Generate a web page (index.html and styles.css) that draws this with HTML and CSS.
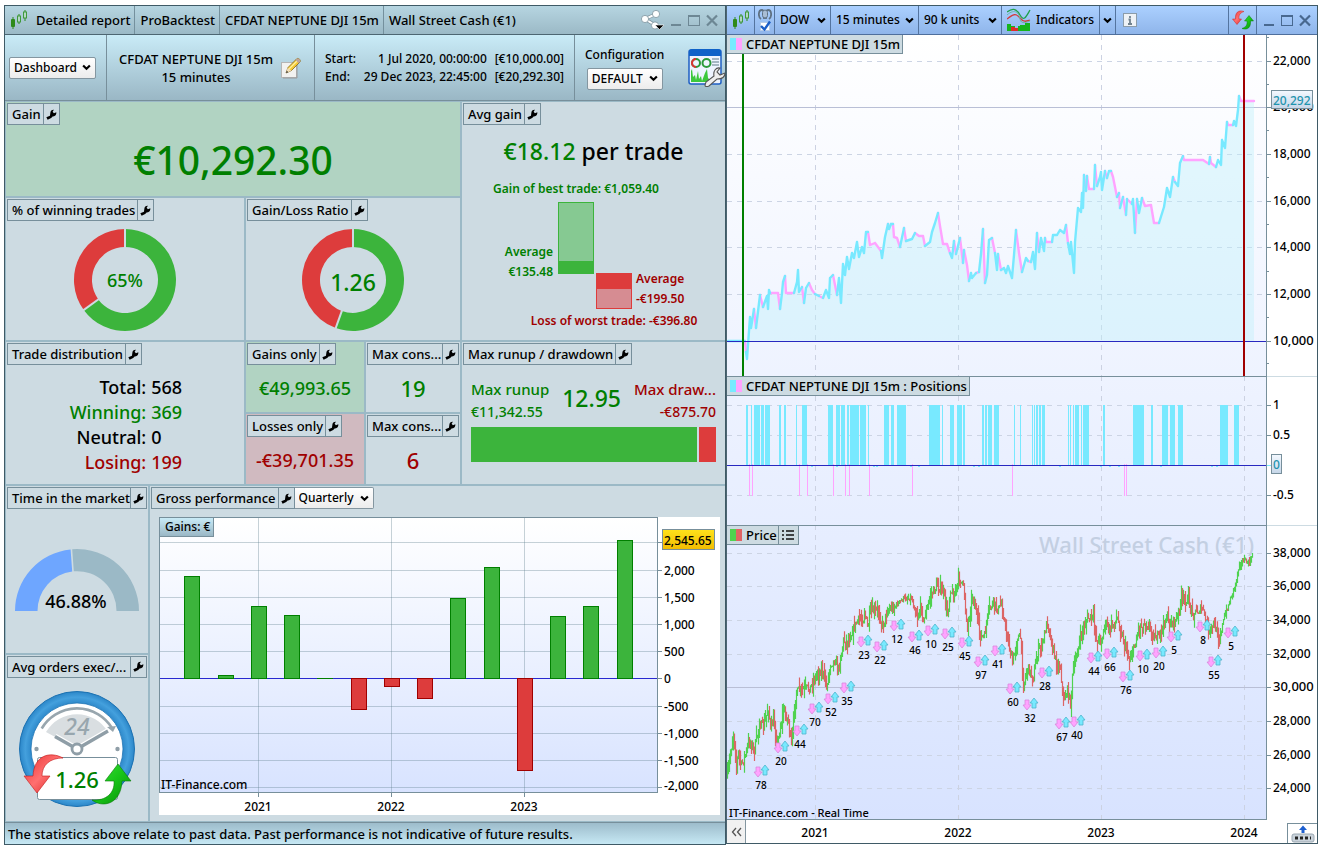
FILE: index.html
```html
<!DOCTYPE html>
<html lang="en">
<head>
<meta charset="utf-8">
<title>Detailed report - ProBacktest</title>
<link rel="stylesheet" href="styles.css">
</head>
<body>
<svg class="defs" aria-hidden="true">
  <defs>
    <symbol id="wrench" viewBox="0 0 10 10"><path d="M0.300 7.600L3.600 6.200L4 3.200C4 1.600 5.500 0.400 7.200 0.600L6 2.600L7.200 3.900L9.400 3C9.700 5.200 8.200 6.900 6.300 6.700L4.700 8.100L1.500 9.800Z" fill="#000"/></symbol>
    <symbol id="chev" viewBox="0 0 8 6"><path d="M1 1.200L4 4.200L7 1.200" fill="none" stroke="#000" stroke-width="1.900"/></symbol>
    <symbol id="candles" viewBox="0 0 18 20"><path d="M3 7V19M9 4V14M15 0V11" stroke="#2f8a1a" stroke-width="1"/><rect x="1" y="9" width="4" height="8" rx="1" fill="#2f8a1a"/><rect x="7.500" y="6" width="3" height="6" fill="#b5d6c4" stroke="#3f9a3a"/><rect x="13.500" y="2" width="3" height="6" fill="#b5d6c4" stroke="#3f9a3a"/></symbol>
    <linearGradient id="plotbg" gradientUnits="userSpaceOnUse" x1="0" y1="35" x2="0" y2="819"><stop offset="0" stop-color="#fff"/><stop offset="1" stop-color="#d8e3ff"/></linearGradient>
    <linearGradient id="gainbg" x1="0" y1="0" x2="0" y2="1"><stop offset="0" stop-color="#fff"/><stop offset="1" stop-color="#d8e3ff"/></linearGradient>
    <linearGradient id="gold" x1="0" y1="0" x2="0" y2="1"><stop offset="0" stop-color="#ffe21c"/><stop offset="1" stop-color="#f2bc00"/></linearGradient>
    <linearGradient id="tagbg" x1="0" y1="0" x2="0" y2="1"><stop offset="0" stop-color="#f4f9ff"/><stop offset="1" stop-color="#c5d6e8"/></linearGradient>
    <linearGradient id="red" x1="0" y1="0" x2="1" y2="1"><stop offset="0" stop-color="#e83030"/><stop offset="0.500" stop-color="#ff7070"/><stop offset="1" stop-color="#d81818"/></linearGradient>
    <linearGradient id="green" x1="0" y1="0" x2="1" y2="1"><stop offset="0" stop-color="#3ee03e"/><stop offset="0.500" stop-color="#18c418"/><stop offset="1" stop-color="#078a07"/></linearGradient>
    <radialGradient id="ring"><stop offset="0.780" stop-color="#2b86c8"/><stop offset="0.900" stop-color="#44a0dd"/><stop offset="1" stop-color="#2b86c8"/></radialGradient>
  </defs>
</svg>
<main class="desk">
  <section class="win report" aria-label="Detailed report">
    <header class="titlebar">
      <svg class="ic-candles" aria-hidden="true"><use href="#candles"/></svg>
      <span class="crumb first">Detailed report</span>
      <span class="crumb">ProBacktest</span>
      <span class="crumb">CFDAT NEPTUNE DJI 15m</span>
      <span class="crumb">Wall Street Cash (€1)</span>
      <div class="winbtns">
        <button class="bare" aria-label="Share"><svg width="24" height="22" viewBox="0 0 24 22"><path d="M16 5L5 10L15 16" fill="none" stroke="#7f949e" stroke-width="3.500"/><path d="M16 5L5 10L15 16" fill="none" stroke="#fff" stroke-width="2"/><g fill="#fff" stroke="#7f949e" stroke-width=".8"><circle cx="16" cy="5" r="3.600"/><circle cx="5" cy="10" r="3.600"/><circle cx="15" cy="16.500" r="3.600"/></g><path d="M15 16H24L19.500 20.500Z" fill="#000" stroke="#fff" stroke-width=".6"/></svg></button>
        <button class="bare" aria-label="Minimize"><svg width="12" height="13"><path d="M1 11H11" stroke="#6d8794" stroke-width="2"/></svg></button>
        <button class="bare" aria-label="Maximize"><svg width="12" height="13"><rect x="0.500" y="1.500" width="11" height="10" fill="none" stroke="#6d8794"/><path d="M0 2H12" stroke="#6d8794" stroke-width="2"/></svg></button>
        <button class="bare" aria-label="Close"><svg width="12" height="13"><path d="M1 1.500L11 11.500M11 1.500L1 11.500" stroke="#6d8794" stroke-width="2.200"/></svg></button>
      </div>
    </header>
    <div class="infobar">
      <div class="info view">
        <span class="pick"><select aria-label="View"><option>Dashboard</option></select><svg><use href="#chev"/></svg></span>
      </div>
      <div class="info strat">
        <p>CFDAT NEPTUNE DJI 15m<br>15 minutes</p>
        <button class="bare" aria-label="Edit"><svg width="22" height="22" viewBox="0 0 22 22"><rect x="1.500" y="5.500" width="15" height="15" fill="#f2f2f0" stroke="#b5b5b5"/><path d="M17 6V21H3" fill="none" stroke="#9a9a9a"/><path d="M6 16L8 10.500L17 1.500C19 1 21 3 20 5L11.500 13.500Z" fill="#f5c934" stroke="#7d6420" stroke-width=".8"/><path d="M9 12L18 3" stroke="#fff0a0" stroke-width="1.300"/><path d="M17 1.500C19 1 21 3 20 5L18.500 6.300L15.700 3Z" fill="#bfa49a"/><path d="M6 16L7.800 10.800L11.300 13.700Z" fill="#f4dfb8"/><path d="M6 16L6.800 13.800L8.300 15.200Z" fill="#333"/></svg></button>
      </div>
      <div class="info dates">
        <span>Start:</span><span>1 Jul 2020, 00:00:00</span><span>[€10,000.00]</span>
        <span>End:</span><span>29 Dec 2023, 22:45:00</span><span>[€20,292.30]</span>
      </div>
      <div class="info conf">
        <div class="confpick">
          <label for="conf">Configuration</label>
          <span class="pick"><select id="conf"><option>DEFAULT</option></select><svg><use href="#chev"/></svg></span>
        </div>
        <button class="bare" aria-label="Configure dashboard"><svg width="37" height="38" viewBox="0 0 37 38"><rect x="1" y="1" width="32" height="34" rx="2" fill="#eef4ff" stroke="#1f5fc4" stroke-width="1.500"/><path d="M1 3Q1 0 4 0H30Q33 0 33 3V7H1Z" fill="#0f62c8"/><circle cx="8" cy="14" r="4" fill="none" stroke="#2a9a3a" stroke-width="2"/><path d="M8 18A4 4 0 0 1 8 10" fill="none" stroke="#d33" stroke-width="2"/><circle cx="18.500" cy="14" r="4" fill="none" stroke="#2a9a3a" stroke-width="2"/><path d="M24 10H31M24 13H31M24 16H31" stroke="#8fa3b0" stroke-width="1.500"/><path d="M3 33V22L4 20L5 28L7 26L8 31L10 22L11 30L13 27L14 32L17 24L19 20L20 29L22 31L25 28L26 33Z" fill="#3cc83c"/><path d="M17 36L18 33L26 27C25 22 28 18 32 19L29 23L32 26L37 24C37 28 34 30 29 30L21 37C19 38 17 38 17 36Z" fill="#eee" stroke="#555" stroke-width="1.100"/></svg></button>
      </div>
    </div>

    <div class="board">
      <div class="upper">
        <article class="tile gain ok"><h2 class="tag"><span>Gain</span><button aria-label="Settings"><svg><use href="#wrench"/></svg></button></h2><p class="fill huge up">€10,292.30</p></article>
        <article class="tile avg"><h2 class="tag"><span>Avg gain</span><button aria-label="Settings"><svg><use href="#wrench"/></svg></button></h2>
          <p class="per"><span class="up">€18.12</span> per trade</p>
          <svg class="wide notes" viewBox="463 171 261 166">
            <text class="up" x="576" y="193" text-anchor="middle">Gain of best trade: €1,059.40</text>
            <rect x="558.500" y="202.500" width="35" height="71" fill="#86c992" stroke="#3cb43c"/><rect x="558" y="261" width="36" height="13" fill="#3cb43c"/>
            <text class="up" x="553" y="256" text-anchor="end">Average</text><text class="up" x="553" y="276" text-anchor="end">€135.48</text>
            <rect x="596.500" y="273.500" width="35" height="35" fill="#d68c92" stroke="#dd3c3c"/><rect x="596" y="273" width="36" height="16" fill="#dd3c3c"/>
            <text class="down" x="636" y="283">Average</text><text class="down" x="636" y="303">-€199.50</text>
            <text class="down" x="614" y="325" text-anchor="middle">Loss of worst trade: -€396.80</text>
          </svg></article>
        <article class="tile win65"><h2 class="tag"><span>% of winning trades</span><button aria-label="Settings"><svg><use href="#wrench"/></svg></button></h2>
          <div class="fill"><svg class="donut" viewBox="-52 -52 104 104" data-share="65"><text class="up" y="7" font-size="18" text-anchor="middle">65%</text></svg></div></article>
        <article class="tile ratio"><h2 class="tag"><span>Gain/Loss Ratio</span><button aria-label="Settings"><svg><use href="#wrench"/></svg></button></h2>
          <div class="fill"><svg class="donut" viewBox="-52 -52 104 104" data-share="55.500"><text class="up" y="11" font-size="23" text-anchor="middle">1.26</text></svg></div></article>
        <article class="tile dist"><h2 class="tag"><span>Trade distribution</span><button aria-label="Settings"><svg><use href="#wrench"/></svg></button></h2>
          <dl><dt>Total:</dt><dd>568</dd><dt class="up">Winning:</dt><dd class="up">369</dd><dt>Neutral:</dt><dd>0</dd><dt class="down">Losing:</dt><dd class="down">199</dd></dl></article>
        <article class="tile gonly ok"><h2 class="tag"><span>Gains only</span><button aria-label="Settings"><svg><use href="#wrench"/></svg></button></h2><p class="fill mid up">€49,993.65</p></article>
        <article class="tile lonly bad"><h2 class="tag"><span>Losses only</span><button aria-label="Settings"><svg><use href="#wrench"/></svg></button></h2><p class="fill mid down">-€39,701.35</p></article>
        <article class="tile mc1"><h2 class="tag full"><span>Max cons...</span><button aria-label="Settings"><svg><use href="#wrench"/></svg></button></h2><p class="fill big up">19</p></article>
        <article class="tile mc2"><h2 class="tag full"><span>Max cons...</span><button aria-label="Settings"><svg><use href="#wrench"/></svg></button></h2><p class="fill big down">6</p></article>
        <article class="tile runup"><h2 class="tag"><span>Max runup / drawdown</span><button aria-label="Settings"><svg><use href="#wrench"/></svg></button></h2>
          <div class="runs"><p class="up">Max runup<br><small>€11,342.55</small></p><strong class="up">12.95</strong><p class="down right">Max draw...<br><small>-€875.70</small></p></div>
          <div class="meter"><i class="m-up"></i><i class="m-down"></i></div></article>
      </div>
      <div class="lower">
        <article class="tile market"><h2 class="tag full"><span>Time in the market</span><button aria-label="Settings"><svg><use href="#wrench"/></svg></button></h2>
          <svg class="wide" viewBox="7 509 140 142">
            <path d="M15 611A62 62 0 0 1 70.600 549.400L72.200 571.500A39.500 39.500 0 0 0 37.500 611Z" fill="#6ea6ff"/>
            <path d="M72.200 549.200A62 62 0 0 1 139 611H116.500A39.500 39.500 0 0 0 73.800 571.300Z" fill="#9bb9c6"/>
            <text x="76" y="608" font-size="18" text-anchor="middle">46.88%</text>
          </svg></article>
        <article class="tile orders"><h2 class="tag full"><span>Avg orders exec/...</span><button aria-label="Settings"><svg><use href="#wrench"/></svg></button></h2>
          <svg class="wide" viewBox="7 677 140 142">
            <circle cx="77" cy="748" r="57.500" fill="url(#ring)" stroke="#1c72b2"/>
            <circle cx="77" cy="748" r="46" fill="#fff" stroke="#1c72b2" stroke-width=".8"/>
            <path d="M46 731A36 36 0 0 1 108 731L77 748Z" fill="#d9dee1"/>
            <path d="M41.700 727.500A41 41 0 0 1 112 727" fill="none" stroke="#98a6ae" stroke-width="2.600"/><path d="M107 726L116 725L113 731Z" fill="#98a6ae"/>
            <text class="hours" x="77" y="734" font-size="23" text-anchor="middle">24</text>
            <path d="M77 748L55 735.500M77 748L108 730" stroke="#fff" stroke-width="6"/><path d="M77 748L55 735.500M77 748L108 730" stroke="#8f9ea7" stroke-width="3.400"/>
            <circle cx="77" cy="748" r="5" fill="#fff" stroke="#8f9ea7" stroke-width="2.800"/><circle cx="36.500" cy="748" r="2.200" fill="#8f9ea7"/><circle cx="117.500" cy="748" r="2.200" fill="#8f9ea7"/>
            <rect x="37.500" y="756.500" width="80" height="42" rx="2" fill="#fff" stroke="#778f9b"/>
            <path d="M63 757C50 750 34 754 33 775L24 775L37 792L50 775L42 775C42 764 50 757 63 757Z" fill="url(#red)" stroke="#c21818" stroke-width=".6"/>
            <path d="M92 799C102 807 121 804 122 780L131 780L118 763L105 780L114 780C115 792 106 800 92 799Z" fill="url(#green)" stroke="#087a08" stroke-width=".6"/>
            <text class="up" x="77" y="787" font-size="22" text-anchor="middle">1.26</text>
          </svg></article>
        <article class="tile gross">
          <div class="tagrow"><h2 class="tag"><span>Gross performance</span><button aria-label="Settings"><svg><use href="#wrench"/></svg></button></h2><span class="pick flush"><select aria-label="Period"><option>Quarterly</option></select><svg><use href="#chev"/></svg></span></div>
          <div class="grosschart"><span class="unit">Gains: €</span><svg class="wide" id="gross" viewBox="159 517 561 298" role="img" aria-label="Quarterly gains"></svg></div>
        </article>
      </div>
    </div>
    <footer class="status">The statistics above relate to past data. Past performance is not indicative of future results.</footer>
  </section>

  <section class="win market-win" aria-label="Wall Street Cash chart">
    <header class="toolbar">
      <div class="cell c-candles"><svg class="ic-candles" aria-hidden="true"><use href="#candles"/></svg></div>
      <button class="cell c-link" aria-label="Link"><svg width="14" height="24" viewBox="0 0 14 24"><path d="M3 11C0 9 0 2 4 2C7 2 6 7 6 11M11 11C14 9 14 2 10 2C7 2 8 7 8 11" fill="none" stroke="#5f7183" stroke-width="1.800"/><rect x="4.500" y="2" width="5" height="8" rx="2.500" fill="#a9bdd4" stroke="#5f7183"/><rect x="2.500" y="14.500" width="9" height="8" fill="#fff" stroke="#b8cce6"/><path d="M3 18L6.500 21.500L12 13.500" fill="none" stroke="#1c5fc8" stroke-width="2.400"/></svg></button>
      <span class="cell pick tool c-dow"><select aria-label="Instrument"><option>DOW</option></select><svg><use href="#chev"/></svg></span>
      <span class="cell pick tool c-tf"><select aria-label="Timeframe"><option>15 minutes</option></select><svg><use href="#chev"/></svg></span>
      <span class="cell pick tool c-units"><select aria-label="Units"><option>90 k units</option></select><svg><use href="#chev"/></svg></span>
      <button class="cell c-ind"><svg width="24" height="24" viewBox="0 0 24 24"><path d="M0 11C6 6 9 5 13 10S20 13 23 12" fill="none" stroke="#d33b3b" stroke-width="1.300"/><path d="M0 4C5 0 9 0 13 7S19 9 23 2" fill="none" stroke="#1fa04a" stroke-width="1.300"/><path d="M0 7C8 0 12 5 13 11S20 14 23 13" fill="none" stroke="#68b8a8"/><path d="M0 23V16H4V18H8V23Z M13 23V17H18V15H23V23Z" fill="#16b51c"/><path d="M4 23V19H8V23Z M8 23V20H12V23Z" fill="#e02b2b"/><path d="M11 18H16V23H11Z" fill="#16b51c"/></svg><span>Indicators</span></button>
      <button class="cell c-more" aria-label="More indicators"><svg><use href="#chev"/></svg></button>
      <button class="cell c-info" aria-label="Information"><svg width="14" height="14"><rect x="0.500" y="0.500" width="13" height="13" fill="#eef2f6" stroke="#8b9caa"/><path d="M7 3V5M5.500 6.500H7V11M5 11H9" stroke="#71828f" stroke-width="1.800" fill="none"/></svg></button>
      <button class="cell c-sync" aria-label="Refresh"><svg width="22" height="20" viewBox="0 0 22 20"><path d="M12 1.500C6 -0.500 3 3 3.500 9H0.500L5 14.500L9.500 9H7C6.500 5 8 3 12 1.500Z" fill="url(#red)" stroke="#c22" stroke-width=".5"/><path d="M10 18.500C16 20.500 19 17 18.500 11H21.500L17 5.500L12.500 11H15C15.500 15 14 17 10 18.500Z" fill="url(#green)" stroke="#087a08" stroke-width=".5"/></svg></button>
      <div class="cell c-win">
        <button class="bare" aria-label="Minimize"><svg width="12" height="13"><path d="M1 11H11" stroke="#48688f" stroke-width="2"/></svg></button>
        <button class="bare" aria-label="Maximize"><svg width="12" height="13"><rect x="0.500" y="1.500" width="11" height="10" fill="none" stroke="#48688f"/><path d="M0 2H12" stroke="#48688f" stroke-width="2"/></svg></button>
        <button class="bare" aria-label="Close"><svg width="12" height="13"><path d="M1 1.500L11 11.500M11 1.500L1 11.500" stroke="#48688f" stroke-width="2.200"/></svg></button>
      </div>
    </header>
    <div class="panel"><span class="legend"><b class="sw eq"></b>CFDAT NEPTUNE DJI 15m</span><svg class="wide" id="equity" viewBox="727 35 590 341" role="img" aria-label="Equity curve"></svg></div>
    <div class="panel"><span class="legend"><b class="sw eq"></b>CFDAT NEPTUNE DJI 15m : Positions</span><svg class="wide" id="positions" viewBox="727 376 590 149" role="img" aria-label="Positions"></svg></div>
    <div class="panel"><span class="legend"><b class="sw pr"></b>Price<button class="list" aria-label="Price options"><svg width="14" height="12"><path d="M1 2H3M1 6H3M1 10H3M5 2H13M5 6H13M5 10H13" stroke="#111" stroke-width="1.600"/></svg></button></span><svg class="wide" id="price" viewBox="727 525 590 295" role="img" aria-label="Price"></svg></div>
    <footer class="xaxis">
      <button class="back" aria-label="Scroll back"><svg width="11" height="10"><path d="M5 1L1.500 5L5 9M10 1L6.500 5L10 9" fill="none" stroke="#555" stroke-width="1.300"/></svg></button>
      <svg class="years" viewBox="746 820 541 23"><g class="axis" text-anchor="middle"><text x="815" y="837">2021</text><text x="958" y="837">2022</text><text x="1101" y="837">2023</text><text x="1244" y="837">2024</text></g></svg>
      <button class="keys" aria-label="Keyboard"><svg width="24" height="18" viewBox="0 0 24 18"><path d="M12 0.500L16 5H13.500V8H10.500V5H8Z" fill="#1c5fd0"/><rect x="1" y="9" width="22" height="8" rx="2" fill="#c9d2da" stroke="#9aa7b1"/><path d="M4 13H20" stroke="#222" stroke-width="3" stroke-dasharray="3 2"/></svg></button>
    </footer>
  </section>
</main>
<script src="app.js"></script>
</body>
</html>
```
FILE: styles.css
```css
* { box-sizing: border-box; }
body {
  margin: 0;
  background: #fff;
  color: #000;
  font: 500 12px/18px "Noto Sans", "Open Sans", sans-serif;
}
p, h2, dl, dd { margin: 0; }
button, select { font: inherit; color: inherit; border: 0; background: none; padding: 0; margin: 0; }
svg { display: block; flex: none; }
svg text { font-family: "Noto Sans", "Open Sans", sans-serif; fill: #000; }
.defs { position: absolute; width: 0; height: 0; }
.up, svg text.up { color: #007f00; fill: #007f00; }
.down, svg text.down { color: #a00000; fill: #a00000; }
.wide { width: 100%; height: auto; }

.desk {
  display: grid;
  grid-template-columns: minmax(0, 722fr) minmax(0, 592fr);
  align-items: start;
  padding: 5px 3px 4px 4px;
}
.win { border: 1px solid #3f5a66; }
.titlebar, .toolbar { display: flex; height: 29px; border-bottom: 1px solid #4d6672; }
.titlebar { align-items: stretch; background: linear-gradient(#b6d5e1, #9bb9c6); font-size: 13px; }
.ic-candles { width: 18px; height: 20px; }
.titlebar .ic-candles { margin: 4px 0 0 5px; }
.crumb { display: flex; align-items: center; padding: 0 4px 0 5px; border-left: 1px solid #74909d; white-space: nowrap; }
.crumb.first { border-left: 0; padding-left: 8px; }
.crumb:nth-of-type(4) { padding-right: 0; }
.winbtns { display: flex; align-items: center; gap: 6px; margin-left: auto; padding-right: 7px; }
.bare { display: block; }

.infobar {
  display: grid;
  grid-template-columns: 101fr 208fr 260fr 151fr;
  height: 66px;
  border-bottom: 1px solid #778f9b;
  background: linear-gradient(#c9ebf7, #9ab7c5);
}
.info { display: flex; align-items: center; border-left: 1px solid #778f9b; white-space: nowrap; }
.info:first-child { border-left: 0; }
.view { padding-left: 4px; }
.strat { justify-content: center; gap: 7px; font-size: 13px; text-align: center; }
.dates { display: grid; grid-template-columns: auto auto auto; justify-content: space-between; align-content: center; padding: 0 10px; text-align: right; }
.dates span:nth-child(3n+1) { text-align: left; }
.conf { justify-content: space-between; padding-left: 10px; }
.confpick { display: grid; justify-items: center; gap: 4px; }

.pick { display: inline-grid; align-items: center; height: 22px; border: 1px solid #8496a0; border-radius: 2px; background: linear-gradient(#fff, #ececec); }
.pick select { grid-area: 1 / 1; appearance: none; padding: 0 18px 0 4px; height: 20px; line-height: 18px; }
.pick svg { grid-area: 1 / 1; justify-self: end; margin-right: 4px; width: 9px; height: 7px; pointer-events: none; }
.pick.flush { border-radius: 0 2px 2px 0; border-left: 0; }

.board { display: grid; gap: 2px; padding: 1px 0 1px 1px; background: #9bb9c6; }
.upper {
  display: grid;
  gap: 2px;
  grid-template-columns: minmax(0, 238fr) minmax(0, 118fr) minmax(0, 94fr) minmax(0, 263fr);
  grid-template-rows: 94px 142px 70px 70px;
  grid-template-areas: "gain gain gain avg" "win ratio ratio avg" "dist gonly mc1 runup" "dist lonly mc2 runup";
}
.lower {
  display: grid;
  gap: 2px;
  grid-template-columns: minmax(0, 142fr) minmax(0, 575fr);
  grid-template-rows: 1fr 1fr;
  grid-template-areas: "market gross" "orders gross";
}
.tile { display: flex; flex-direction: column; min-width: 0; padding: 1px; background: #cddbe2; }
.ok { background: #b1d3c2; }
.bad { background: #d0bac0; }
.gain { grid-area: gain; } .avg { grid-area: avg; } .win65 { grid-area: win; } .ratio { grid-area: ratio; }
.dist { grid-area: dist; } .gonly { grid-area: gonly; } .lonly { grid-area: lonly; } .mc1 { grid-area: mc1; }
.mc2 { grid-area: mc2; } .runup { grid-area: runup; } .market { grid-area: market; } .orders { grid-area: orders; } .gross { grid-area: gross; }

.tag { display: flex; align-self: flex-start; height: 22px; border: 1px solid #778f9b; background: #cddbe2; font: inherit; font-size: 13px; line-height: 21px; white-space: nowrap; }
.tag span { padding: 0 2px 0 4px; }
.tag button { display: grid; place-items: center; flex: none; width: 16px; border-left: 1px solid #778f9b; }
.tag button svg { width: 11px; height: 11px; }
.tag.full { align-self: stretch; }
.tag.full span { flex: 1; min-width: 0; padding-right: 0; }
.fill { flex: 1; display: flex; align-items: center; justify-content: center; }
.huge { font-size: 39px; }
.mid { font-size: 18px; line-height: 24px; }
.big { font-size: 22px; }
.donut { width: 104px; height: 104px; }
.per { margin-top: 10px; font-size: 23px; line-height: 32px; text-align: center; }
.avg .wide { margin-top: 4px; }
.notes text { font-weight: 600; }
.dist dl { display: grid; grid-template-columns: 59% 1fr; column-gap: 5px; margin-top: 10px; font-size: 18px; line-height: 25px; }
.dist dt { text-align: right; }
.runs { display: flex; justify-content: space-between; align-items: flex-start; padding: 13px 8px 0; font-size: 15px; line-height: 22px; white-space: nowrap; }
.runs small { font-size: 14px; }
.runs strong { font-size: 23px; font-weight: 500; line-height: 40px; }
.right { text-align: right; }
.meter { display: flex; gap: 2px; height: 35px; margin: 4px 8px 0; }
.m-up { flex: 12.95; background: #3cb43c; }
.m-down { flex: 1; background: #dd3c3c; }
.hours { font-style: italic; }
svg text.hours { fill: #98a6ae; }
.tagrow { display: flex; }
.grosschart { position: relative; margin: 8px 4px 5px 8px; background: #fff; }
.unit { position: absolute; left: 0; top: 0; padding: 0 3px 0 5px; border: 1px solid #778f9b; background: linear-gradient(#c9ebf7, #9ab7c5); }
.status { height: 22px; padding-left: 3px; border-top: 1px solid #778f9b; background: linear-gradient(#9dbccb, #c6e8f4); font-size: 13px; line-height: 22px; white-space: nowrap; overflow: hidden; }

.market-win { border-left-color: #4d6672; }
.toolbar { background: linear-gradient(#abd0ff, #8fb5ea); border-color: #4f6f9c; }
.cell { display: flex; align-items: center; justify-content: center; flex: none; border-right: 1px solid #54749f; white-space: nowrap; }
.c-candles { width: 28px; }
.c-link { width: 20px; }
.pick.tool { display: grid; justify-content: stretch; align-self: stretch; height: 28px; border-width: 0 1px 0 0; border-radius: 0; background: none; }
.tool select { padding-left: 5px; padding-right: 0; width: 100%; }
.tool svg { margin-right: 4px; }
.c-dow { width: 56px; } .c-tf { width: 88px; } .c-units { width: 83px; }
.c-ind { width: 98px; gap: 5px; }
.c-more { width: 16px; }
.c-more svg { width: 9px; height: 7px; }
.c-info { margin-right: auto; padding-left: 7px; border-right: 0; }
.c-sync { width: 29px; border-left: 1px solid #54749f; }
.c-win { width: 60px; gap: 6px; border-right: 0; }

.panel { position: relative; }
.legend { position: absolute; left: 0; top: 0; display: flex; align-items: center; gap: 4px; height: 19px; padding: 0 2px 0 3px; border: 1px solid #778f9b; border-width: 0 1px 1px 0; background: #cddbe2; font-size: 13px; }
.panel + .panel .legend { top: 1px; }
.sw { width: 12px; height: 12px; }
.eq { background: linear-gradient(90deg, #78e9ff 50%, #ffa3ff 50%); }
.pr { background: linear-gradient(90deg, #4fd24f 50%, #e06464 50%); }
.list { display: grid; place-items: center; width: 20px; height: 18px; margin-left: -3px; margin-right: -2px; border-left: 1px solid #778f9b; }
svg .axis text, svg.chart text { font-size: 12px; }
svg.chart text.major { font-size: 13px; }
svg.chart text.mark { font-size: 10px; }
svg.chart text.note { font-size: 11px; }
svg.chart text.water { font-size: 22px; fill: #c3cfe2; }
.xaxis { display: flex; align-items: flex-start; height: 23px; background: #fff; }
.back { display: grid; place-items: center; width: 19px; height: 23px; border-right: 1px solid #8496a0; background: #f1f1f1; }
.years { flex: 1; min-width: 0; }
.keys { display: grid; place-items: center; width: 30px; height: 20px; align-self: flex-end; border: 1px solid #778f9b; border-width: 1px 0 0 1px; }
```
FILE: app.js
```js
const NS = "http://www.w3.org/2000/svg";
const $ = (s) => document.querySelector(s);

function add(parent, name, attrs, text) {
  const el = document.createElementNS(NS, name);
  for (const k in attrs) el.setAttribute(k, attrs[k]);
  if (text !== undefined) el.textContent = text;
  parent.appendChild(el);
  return el;
}
const line = (p, x1, y1, x2, y2, stroke, extra = {}) =>
  add(p, "line", { x1, y1, x2, y2, stroke, ...extra });

// Donuts: share of winners (green) against the rest (red)
document.querySelectorAll(".donut").forEach((svg) => {
  const share = Number(svg.dataset.share) / 100;
  const pt = (t, r) => [r * Math.sin(t), -r * Math.cos(t)].map((v) => v.toFixed(2)).join(" ");
  const a = share * 2 * Math.PI;
  const arc = (s, e, fill) => {
    const big = e - s > Math.PI ? 1 : 0;
    const d = `M${pt(s, 51)}A51 51 0 ${big} 1 ${pt(e, 51)}L${pt(e, 33)}A33 33 0 ${big} 0 ${pt(s, 33)}Z`;
    add(svg, "path", { d, fill });
  };
  arc(0, a, "#3cb43c");
  arc(a, 2 * Math.PI, "#dd3c3c");
  [0, a].forEach((t) => add(svg, "path", { d: `M${pt(t, 31)}L${pt(t, 53)}`, stroke: "#cddbe2", "stroke-width": 2 }));
});

// Quarterly gains
(function () {
  const g = $("#gross");
  g.classList.add("chart");
  add(g, "rect", { x: 159.5, y: 517.5, width: 498, height: 275, fill: "url(#gainbg)" });
  const grid = [542, 570, 597, 624, 651, 706, 733, 760, 787];
  grid.forEach((y) => line(g, 160, y + 0.5, 657, y + 0.5, "#5f7f8c", { "stroke-opacity": 0.35 }));
  [258, 391, 524].forEach((x, i) => {
    line(g, x + 0.5, 518, x + 0.5, 792, "#5f7f8c", { "stroke-opacity": 0.35 });
    line(g, x + 0.5, 792, x + 0.5, 797, "#778f9b");
    add(g, "text", { x, y: 811, "text-anchor": "middle" }, 2021 + i);
  });
  add(g, "rect", { x: 159.5, y: 517.5, width: 498, height: 275, fill: "none", stroke: "#778f9b" });
  const bars = [[184, 576], [218, 675], [251, 606], [284, 615], [317, 678], [351, 709], [384, 686], [417, 698],
    [450, 598], [484, 567], [517, 770], [550, 616], [583, 606], [617, 540]];
  line(g, 160, 678.5, 657, 678.5, "#2828d0");
  bars.forEach(([x, y]) => {
    if (y === 678) {
      line(g, x, 678.5, x + 16, 678.5, "#007f00");
      return;
    }
    const up = y < 678;
    add(g, "rect", { x: x + 0.5, y: Math.min(y, 678) + 0.5, width: 15, height: Math.abs(678 - y),
      fill: up ? "#3cb43c" : "#dd3c3c", stroke: up ? "#007f00" : "#a00000" });
  });
  [["2,000", 570], ["1,500", 597], ["1,000", 624], ["500", 651], ["0", 678], ["-500", 706], ["-1,000", 733],
    ["-1,500", 760], ["-2,000", 787]].forEach(([t, y]) => {
    line(g, 658, y + 0.5, 662, y + 0.5, "#778f9b");
    add(g, "text", { x: 664, y: Math.min(y + 5, 790) }, t);
  });
  line(g, 658, 542.5, 662, 542.5, "#778f9b");
  add(g, "rect", { x: 662.5, y: 529.5, width: 52, height: 20, fill: "url(#gold)", stroke: "#778f9b" });
  add(g, "text", { x: 664, y: 545 }, "2,545.65");
  add(g, "text", { x: 161, y: 789 }, "IT-Finance.com");
})();

const YEARS = [815.5, 958.5, 1101.5, 1244.5];
function frame(svg, top, bottom, levels, solid) {
  svg.classList.add("chart");
  add(svg, "rect", { x: 727, y: top, width: 590, height: bottom - top, fill: "#fff" });
  add(svg, "rect", { x: 727, y: top, width: 539, height: bottom - top, fill: "url(#plotbg)" });
  const dash = { "stroke-dasharray": "5 5" };
  YEARS.forEach((x) => line(svg, x, top, x, bottom, "#ccd2e2", dash));
  levels.forEach((y) => line(svg, 727, y + 0.5, 1266, y + 0.5, y === solid ? "#b9bfd6" : "#ccd4e4", y === solid ? {} : dash));
  line(svg, 1266.5, top, 1266.5, bottom, "#778f9b");
}
const MAJOR = ["10,000", "20,000", "30,000"];
function labels(svg, list) {
  list.forEach(([t, y]) => {
    line(svg, 1267, y + 0.5, 1271, y + 0.5, "#778f9b");
    add(svg, "text", { x: 1273, y: y + 4, class: MAJOR.includes(t) ? "major" : "minor" }, t);
  });
}

// Equity curve: [x, y, 1 when the run is drawn in the second colour]
(function () {
  const s = $("#equity");
  const ys = [61, 107, 154, 201, 247, 294, 341];
  frame(s, 35, 376, ys.slice(0, 6), 107);
  const pts = [[728,341],[745,341],[746,352,1],[747,359],[750,317],[751,328],[754,309],[756,328,1],[760,295],[763,307,1],
    [767,296],[768,309],[769,290],[770,293],[778,293,1],[780,309,1],[782,293],[783,282],[785,276],[786,293,1],[794,293,1],
    [797,282],[798,270],[799,292],[802,287],[804,303,1],[806,288],[809,283],[812,290,1],[815,294,1],[819,296],[823,298,1],
    [826,290],[829,298],[830,278],[833,275],[837,295,1],[839,278],[841,303],[843,264],[845,275],[847,257],[849,269],
    [852,253],[854,258],[857,242],[859,257],[862,247],[864,253],[866,232],[868,232],[870,245,1],[875,243,1],[881,251,1],
    [882,258],[885,237],[888,224],[889,229,1],[891,224],[893,224],[894,237,1],[897,238,1],[900,247,1],[904,228],
    [906,241,1],[912,239],[915,233],[919,236,1],[923,236,1],[925,246,1],[930,242],[932,232],[935,223],[938,213],
    [940,226,1],[943,244,1],[947,244,1],[950,253,1],[952,258],[954,241],[956,254,1],[960,238],[963,263,1],[964,250],
    [967,265,1],[969,281,1],[971,273],[972,278],[976,273],[979,272,1],[981,254],[983,229],[985,283,1],[987,275],[989,240],
    [992,238],[995,253,1],[997,270],[998,254],[1001,270,1],[1004,268],[1006,273],[1008,266],[1012,278],[1014,255],
    [1016,230],[1019,253,1],[1022,272,1],[1026,258],[1028,261],[1031,262,1],[1033,252],[1035,269],[1037,233],[1039,252,1],
    [1041,238],[1044,251],[1045,238],[1046,242,1],[1052,242,1],[1053,235],[1057,235],[1060,230],[1064,233],[1066,225],
    [1068,243,1],[1070,254],[1071,242],[1074,273],[1075,242],[1078,208],[1081,212],[1082,193],[1083,208],[1084,175],
    [1086,191,1],[1087,176],[1089,189,1],[1094,189,1],[1095,165],[1097,186,1],[1100,177],[1101,172],[1102,190],[1105,171],
    [1107,178,1],[1109,171],[1111,171],[1113,177,1],[1117,197,1],[1119,193],[1120,208,1],[1123,197],[1126,215,1],
    [1127,199],[1132,204,1],[1133,199],[1135,233],[1137,199,1],[1139,213],[1142,198],[1145,206,1],[1151,205,1],
    [1154,223,1],[1159,223,1],[1164,207],[1167,188],[1170,197],[1173,177],[1175,182,1],[1178,186],[1180,163],[1183,156],
    [1184,160,1],[1203,160,1],[1209,164,1],[1210,157],[1211,163,1],[1216,167,1],[1218,160],[1221,165],[1222,140],[1225,148],
    [1227,122],[1228,125,1],[1233,125,1],[1234,121],[1236,126],[1238,110],[1239,96],[1241,101,1],[1254,101,1]];
  const d = pts.map(([x, y]) => `${x} ${y}`).join("L");
  add(s, "path", { d: `M${d}V341H728Z`, fill: "#bdf0fb", "fill-opacity": 0.4 });
  let cyan = "", pink = "";
  for (let i = 1; i < pts.length; i++) {
    const seg = `M${pts[i - 1][0]} ${pts[i - 1][1]}L${pts[i][0]} ${pts[i][1]}`;
    if (pts[i][2]) pink += seg; else cyan += seg;
  }
  const st = { fill: "none", "stroke-width": 2.4, "stroke-linecap": "round" };
  add(s, "path", { d: pink, stroke: "#ffa3ff", ...st });
  add(s, "path", { d: cyan, stroke: "#78e9ff", ...st });
  line(s, 727, 341.5, 1266, 341.5, "#2828c0");
  line(s, 743, 35, 743, 376, "#007f00", { "stroke-width": 2 });
  line(s, 1244, 35, 1244, 376, "#a00000", { "stroke-width": 2 });
  [37, 84, 130, 177, 224, 271, 317, 363].forEach((y) => line(s, 1267, y + 0.5, 1269, y + 0.5, "#778f9b"));
  labels(s, [["22,000", 61], ["20,000", 107], ["18,000", 154], ["16,000", 201], ["14,000", 247], ["12,000", 294], ["10,000", 341]]);
  add(s, "rect", { x: 1271.5, y: 90.5, width: 41, height: 18, fill: "url(#tagbg)", stroke: "#778f9b" });
  const t = add(s, "text", { x: 1273, y: 105 }, "20,292");
  t.style.fill = "#1f93ad";
})();

// Long (above zero) and short (below zero) positions
(function () {
  const s = $("#positions");
  frame(s, 376, 525, [405, 435, 495]);
  line(s, 727, 376.5, 1266, 376.5, "#778f9b");
  line(s, 1267, 376.5, 1317, 376.5, "#cddbe2");
  const longs = [[746,748],[751,752],[754,760],[761,764],[765,770],[779,781],[784,786],[796,797],[802,807],[828,833],
    [836,840],[841,845],[847,849],[850,859],[860,866],[868,869],[884,889],[891,894],[897,906],[929,940],[942,943],
    [950,954],[957,962],[963,965],[982,984],[985,987],[988,992],[994,999],[1014,1015],[1020,1021],[1032,1033],
    [1034,1035],[1036,1038],[1039,1041],[1042,1045],[1068,1069],[1070,1071],[1073,1074],[1075,1079],[1081,1082],
    [1083,1089],[1103,1105],[1133,1144],[1151,1153],[1162,1168],[1170,1175],[1178,1183],[1220,1228],[1234,1239]];
  longs.forEach(([a, b]) => add(s, "rect", { x: a, y: 405, width: b - a, height: 60, fill: "#78e9ff" }));
  [749, 752, 799, 807, 833, 845, 849, 869, 912, 1012, 1124, 1126].forEach((x) => line(s, x + 0.5, 464, x + 0.5, 496, "#ffa3ff"));
  [811, 836, 873, 876, 910, 918, 973, 978, 1059, 1100, 1109, 1118, 1160, 1211, 1216].forEach((x) =>
    add(s, "rect", { x, y: 466, width: 2, height: 1, fill: "#78e9ff" }));
  line(s, 727, 465.5, 1266, 465.5, "#2828c0");
  labels(s, [["1", 405], ["0.5", 435], ["-0.5", 495]]);
  line(s, 1267, 465.5, 1271, 465.5, "#78e9ff");
  add(s, "rect", { x: 1271.5, y: 454.5, width: 10, height: 19, fill: "url(#tagbg)", stroke: "#778f9b" });
  const t = add(s, "text", { x: 1273, y: 469 }, "0");
  t.style.fill = "#1f93ad";
})();

// Price bars run through the turning points below
(function () {
  const s = $("#price");
  const ys = [553, 586, 620, 654, 687, 721, 755, 788];
  frame(s, 525, 820, ys, 687);
  line(s, 727, 525.5, 1266, 525.5, "#778f9b");
  line(s, 1267, 525.5, 1317, 525.5, "#cddbe2");
  line(s, 727, 819.5, 1267, 819.5, "#778f9b");
  add(s, "text", { class: "water", x: 1254, y: 553, "text-anchor": "end" }, "Wall Street Cash (€1)");
  const way = [[727,775],[733,732],[736,765],[738,752],[741,765],[745,754],[749,740],[754,750],[759,723],[763,727],
    [768,707],[770,728],[773,721],[777,743],[783,710],[788,720],[791,746],[795,696],[798,690],[810,687],[817,672],
    [822,670],[826,686],[830,663],[835,660],[838,669],[843,640],[847,642],[857,620],[863,618],[864,610],[867,627],
    [870,612],[878,610],[882,626],[887,610],[893,607],[903,598],[911,598],[917,617],[921,605],[923,622],[930,595],
    [937,585],[943,592],[947,614],[950,588],[953,597],[959,577],[963,587],[967,627],[972,595],[975,607],[980,636],
    [984,637],[988,610],[993,602],[998,610],[1001,603],[1006,633],[1009,647],[1012,663],[1017,637],[1020,637],
    [1023,685],[1027,667],[1033,677],[1037,653],[1042,643],[1047,620],[1052,647],[1056,663],[1060,667],[1063,700],
    [1067,690],[1070,703],[1072,677],[1077,650],[1082,630],[1087,618],[1093,617],[1096,640],[1102,637],[1105,620],
    [1108,630],[1117,618],[1123,640],[1129,660],[1135,643],[1138,627],[1147,623],[1153,635],[1158,637],[1166,617],
    [1169,623],[1176,620],[1181,598],[1188,600],[1193,613],[1202,608],[1209,633],[1213,623],[1219,638],[1223,620],
    [1232,592],[1235,583],[1239,563],[1243,560],[1249,563],[1253,553]];
  let seed = 7;
  const rnd = () => (seed = (seed * 16807) % 2147483647) / 2147483647;
  let up = "", down = "", prev = 777;
  for (let i = 1; i < way.length; i++) {
    const [x0, y0] = way[i - 1], [x1, y1] = way[i];
    for (let x = x0; x < x1; x++) {
      const calm = (x > 895 && x < 915) || x > 1220 ? 0.5 : 1;
      const y = y0 + ((y1 - y0) * (x - x0)) / (x1 - x0) + (rnd() - 0.5) * 9 * calm;
      const hi = Math.min(y, prev) - rnd() ** 2 * 10 * calm;
      const lo = Math.max(y, prev) + rnd() ** 2 * 10 * calm + 1;
      const seg = `M${x + 0.5} ${hi.toFixed(1)}V${lo.toFixed(1)}`;
      if (y < prev) up += seg; else down += seg;
      prev = y;
    }
  }
  add(s, "path", { d: up, stroke: "#4fd24f", "stroke-width": 1.2 });
  add(s, "path", { d: down, stroke: "#dc6464", "stroke-width": 1.2 });

  const marks = [[758,772,78],[778,748,20],[797,731,44],[812,709,70],[828,699,52],[844,688,35],[861,642,23],[877,647,22],
    [894,626,12],[912,637,46],[928,631,10],[945,634,25],[962,643,45],[978,662,97],[995,651,41],[1010,689,60],
    [1027,705,32],[1042,673,28],[1059,724,67],[1074,722,40],[1091,658,44],[1107,654,66],[1123,677,76],[1140,656,10],
    [1156,653,20],[1171,637,5],[1200,627,8],[1211,662,55],[1228,633,5]];
  marks.forEach(([x, y, n]) => {
    add(s, "path", { d: `M${x - 2} ${y - 5}H${x + 2}V${y}H${x + 4}L${x} ${y + 5}L${x - 4} ${y}H${x - 2}Z`, fill: "#ffa3ff", stroke: "#d888dc", "stroke-width": 0.8 });
    const cx = x + 7, cy = y - 2;
    add(s, "path", { d: `M${cx - 2} ${cy + 5}H${cx + 2}V${cy}H${cx + 4}L${cx} ${cy - 5}L${cx - 4} ${cy}H${cx - 2}Z`, fill: "#78e9ff", stroke: "#4fb4cc", "stroke-width": 0.8 });
    add(s, "text", { class: "mark", x: x + 3, y: y + 17, "text-anchor": "middle" }, n);
  });
  labels(s, ys.map((y, i) => [`${38 - 2 * i},000`, y]));
  add(s, "text", { class: "note", x: 729, y: 817 }, "IT-Finance.com - Real Time");
})();
```
